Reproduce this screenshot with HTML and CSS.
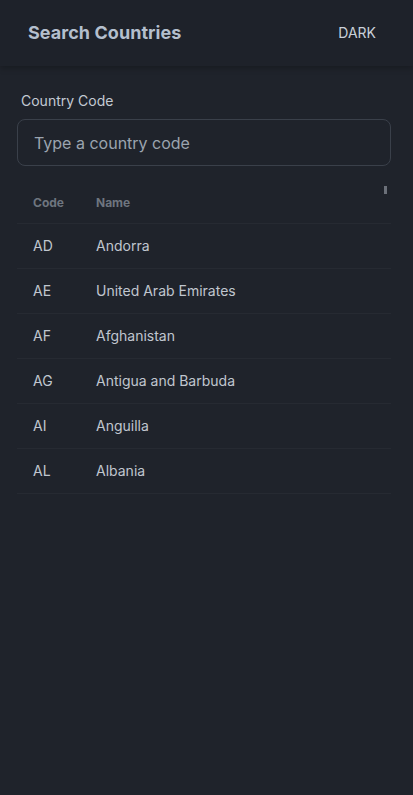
FILE: index.html
```html
<!DOCTYPE html>
<html>
<head>
<meta charset="utf-8">
<link rel="stylesheet" href="styles.css">
</head>
<body>
<header class="topbar">
  <h1 class="title">Search Countries</h1>
  <button class="mode">DARK</button>
</header>
<main class="content">
  <label class="label" for="code">Country Code</label>
  <input id="code" class="field" type="text" placeholder="Type a country code">
  <div class="table-wrap">
    <div class="thumb"></div>
    <table class="table">
      <thead>
        <tr><th class="c1">Code</th><th>Name</th></tr>
      </thead>
      <tbody>
        <tr><td class="c1">AD</td><td>Andorra</td></tr>
        <tr><td class="c1">AE</td><td>United Arab Emirates</td></tr>
        <tr><td class="c1">AF</td><td>Afghanistan</td></tr>
        <tr><td class="c1">AG</td><td>Antigua and Barbuda</td></tr>
        <tr><td class="c1">AI</td><td>Anguilla</td></tr>
        <tr><td class="c1">AL</td><td>Albania</td></tr>
      </tbody>
    </table>
  </div>
</main>
</body>
</html>
```
FILE: styles.css
```css
* { box-sizing: border-box; }
html, body { height: 100%; }
body {
  margin: 0;
  background: #1f232b;
  font-family: Inter, "Noto Sans", sans-serif;
  color: #c3c9d2;
}
.topbar {
  height: 66px;
  display: flex;
  align-items: center;
  justify-content: space-between;
  padding: 0 28px 2px 28px;
  background: #1e222a;
  box-shadow: 0 2px 6px rgba(0,0,0,0.25);
  position: relative;
}
.title {
  margin: 0;
  font-size: 18px;
  font-weight: 700;
  letter-spacing: 0.05px;
  color: #b4bfcd;
}
.mode {
  background: none;
  border: none;
  color: #c9d0d9;
  font-family: Inter, sans-serif;
  font-size: 14px;
  padding: 0 9px 0 0;
  cursor: pointer;
}
.content {
  padding: 25px 22px 0 17px;
  display: flex;
  flex-direction: column;
}
.label {
  font-size: 14px;
  line-height: 20px;
  color: #c3cad3;
  margin-left: 4px;
  margin-bottom: 8px;
}
.field {
  height: 47px;
  border: 1px solid #3a404a;
  border-radius: 8px;
  background: transparent;
  padding: 0 16px;
  font-family: Inter, sans-serif;
  font-size: 16px;
  color: #c3c9d2;
  outline: none;
}
.field::placeholder { color: #9ba4af; }
.table-wrap {
  margin-top: 16px;
  position: relative;
}
.thumb {
  position: absolute;
  right: 4px;
  top: 4px;
  width: 3px;
  height: 8px;
  background: #6b7079;
}
.table {
  width: 100%;
  border-collapse: collapse;
}
.table th {
  text-align: left;
  font-size: 12px;
  font-weight: 700;
  color: #6e757f;
  height: 41px;
  padding: 0;
  border-bottom: 1px solid #262a32;
  vertical-align: middle;
}
.table td {
  height: 45px;
  font-size: 14px;
  color: #c0c6cf;
  border-bottom: 1px solid #262a32;
  padding: 0;
}
.table .c1 { width: 79px; padding-left: 16px; }
```
